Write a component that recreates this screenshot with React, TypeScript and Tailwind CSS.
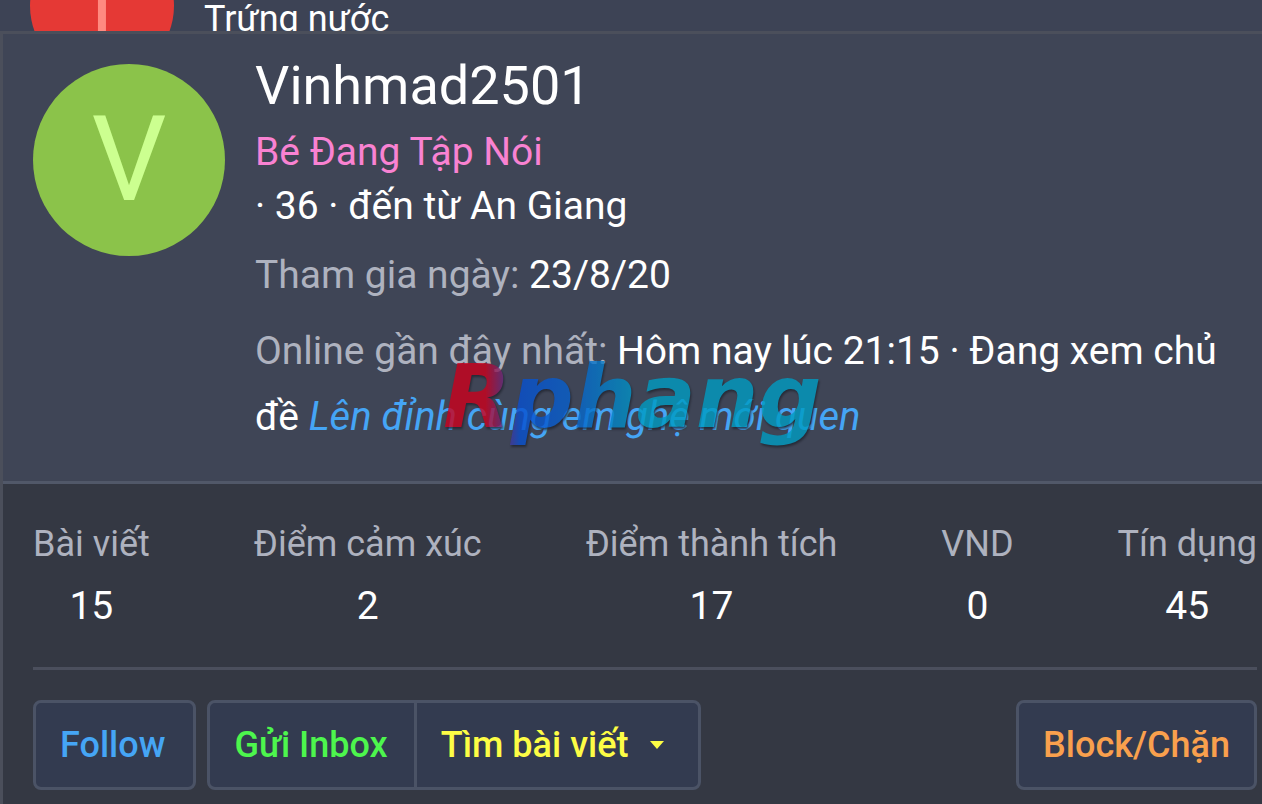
const stats = [
  { label: 'Bài viết', value: '15' },
  { label: 'Điểm cảm xúc', value: '2' },
  { label: 'Điểm thành tích', value: '17' },
  { label: 'VND', value: '0' },
  { label: 'Tín dụng', value: '45' },
];

export default function App() {
  return (
    <div className="min-h-screen overflow-hidden bg-[#343843] font-['Roboto','Noto_Sans',sans-serif] text-white">
      {/* Post behind the card */}
      <div className="flex h-[31px] items-end gap-[30px] overflow-hidden bg-[#3d4355] pl-[30px]">
        <div className="-mb-[47px] flex size-36 shrink-0 items-center justify-center rounded-full bg-[#e53935] text-[86px] leading-none text-[#ff8a80]">
          T
        </div>
        <span className="-mb-[12px] text-[36px] leading-[48px]">Trứng nước</span>
      </div>

      <div className="border-t-3 border-l-3 border-[#4b4f5b]">
        <div className="relative flex gap-[30px] border-b-3 border-[#515869] bg-[#3f4556] px-[30px] pt-4 pb-[31px]">
          <div className="mt-[14px] flex size-48 shrink-0 items-center justify-center rounded-full bg-[#8bc34a] text-[118px] leading-none text-[#ccff90]">
            V
          </div>
          <div className="min-w-0 flex-1 text-[39px] leading-[54px]">
            <h1 className="mb-[3px] text-[54px] leading-[72px]">Vinhmad2501</h1>
            <div className="text-[#f982d2]">Bé Đang Tập Nói</div>
            <div>· 36 · đến từ An Giang</div>
            <div className="mt-[15px]">
              <span className="text-[#aeb2bf]">Tham gia ngày:</span> 23/8/20
            </div>
            <div className="mt-4 leading-[66px]">
              <span className="text-[#aeb2bf]">Online gần đây nhất:</span> Hôm nay lúc 21:15 · Đang xem chủ đề{' '}
              <a href="#" className="text-[40px] text-[#45a5f5] italic">
                Lên đỉnh cùng em ghệ mới quen
              </a>
            </div>
          </div>
          {/* Site watermark */}
          <div
            aria-hidden="true"
            className="pointer-events-none absolute top-[308px] left-[440px] bg-[linear-gradient(90deg,#cc001c_0%,#cc001c_11%,#0850d0_20%,#0862cc_34%,#009cc2_52%,#009cc2_100%)] bg-clip-text pr-2 font-['DejaVu_Sans',sans-serif] text-[88px] leading-[110px] font-bold whitespace-nowrap text-transparent italic opacity-80 drop-shadow-[1px_2px_1px_#20242f]"
          >
            Rphang
          </div>
        </div>

        <div className="pt-[30px] pr-[5px] pb-[14px] pl-[30px]">
          <dl className="flex justify-between border-b-3 border-[#4b4f5d] pb-[29px] text-center">
            {stats.map((stat) => (
              <div key={stat.label}>
                <dt className="text-[36px] leading-[60px] text-[#aeb2bf]">{stat.label}</dt>
                <dd className="text-[39px] leading-[64px]">{stat.value}</dd>
              </div>
            ))}
          </dl>

          <div className="mt-[30px] flex gap-[11px] text-[36px] leading-[84px] font-medium">
            <button className="rounded-lg border-3 border-[#4b5366] bg-[#333b50] pr-7 pl-6 text-[#45a5f5]">
              Follow
            </button>
            <div className="flex rounded-lg border-3 border-[#4b5366] bg-[#333b50]">
              <button className="border-r-3 border-[#4b5366] pr-[26px] pl-6 text-[#4df64d]">Gửi Inbox</button>
              <button className="flex items-center gap-[22px] pr-[34px] pl-6 text-[#fdfd45]">
                Tìm bài viết
                <svg viewBox="0 0 14 8" className="h-2 w-[14px]" fill="currentColor">
                  <path d="M0 0h14L7 8z" />
                </svg>
              </button>
            </div>
            <button className="ml-auto rounded-lg border-3 border-[#4b5366] bg-[#333b50] px-6 text-[#f9a04d]">
              Block/Chặn
            </button>
          </div>
        </div>
      </div>
    </div>
  );
}
